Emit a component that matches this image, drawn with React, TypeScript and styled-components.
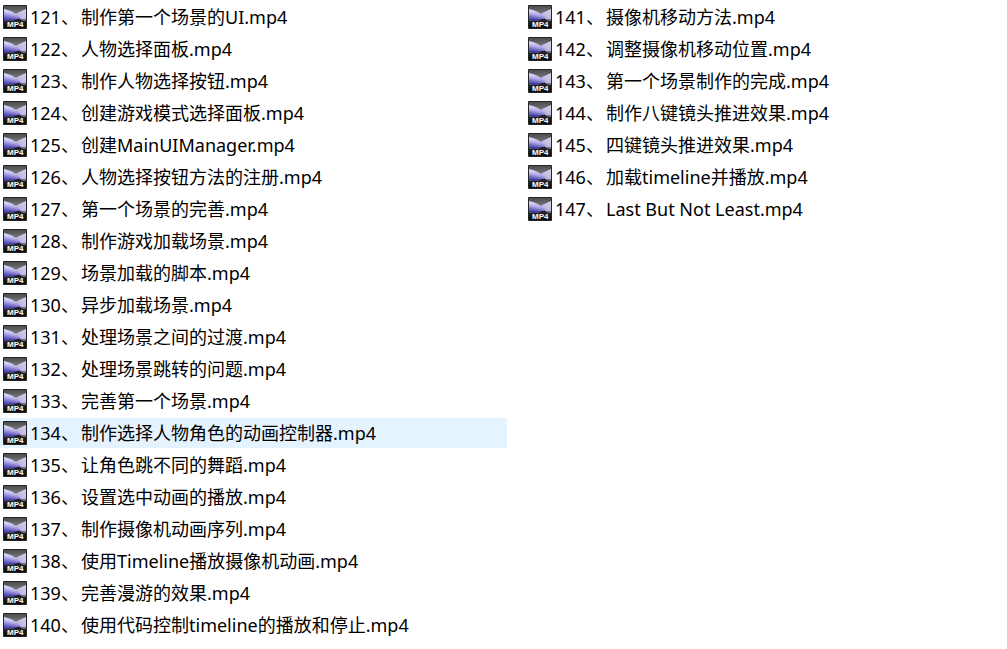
import React from "react";
import styled, { createGlobalStyle } from "styled-components";

const GlobalStyle = createGlobalStyle`
  body {
    margin: 0;
    background: #ffffff;
    color: #000000;
    font-family: "Noto Sans", "Noto Sans CJK SC", sans-serif;
    font-size: 18px;
  }
`;

const FileList = styled.ul`
  display: grid;
  grid-template-columns: minmax(0, 507fr) minmax(0, 482fr);
  grid-template-rows: repeat(20, 30px);
  grid-auto-flow: column;
  gap: 2px 18px;
  margin: 0;
  padding: 2px 0 0;
  list-style: none;
`;

const FileRow = styled.li<{ $hovered: boolean }>`
  display: flex;
  align-items: center;
  gap: 3px;
  padding-left: 3px;
  background: ${(p) => (p.$hovered ? "#e5f3ff" : "transparent")};
`;

const FileName = styled.span`
  line-height: 30px;
  white-space: nowrap;
`;

const FileNumber = styled.span`
  display: inline-block;
  min-width: 51px;
`;

const Icon = styled.svg`
  display: block;
  flex: none;
  width: 24px;
  height: 24px;
`;

const IconLabel = styled.text`
  font-family: "Liberation Sans", sans-serif;
  font-size: 8px;
  font-weight: bold;
  fill: #ffffff;
`;

function IconPaints() {
  return (
    <svg width="0" height="0" style={{ position: "absolute" }} aria-hidden="true">
      <defs>
        <linearGradient id="tile" x1="0" y1="0" x2="0" y2="1">
          <stop offset="0" stopColor="#4c4c4c" />
          <stop offset="0.35" stopColor="#777777" />
          <stop offset="0.56" stopColor="#5c5c5c" />
          <stop offset="0.6" stopColor="#262626" />
          <stop offset="1" stopColor="#0c0c0c" />
        </linearGradient>
        <linearGradient id="leftWing" x1="0.6" y1="0.2" x2="0.4" y2="1">
          <stop offset="0" stopColor="#e2e0fa" />
          <stop offset="0.4" stopColor="#bab6ee" />
          <stop offset="0.8" stopColor="#7a73cc" />
          <stop offset="1" stopColor="#5b52b4" />
        </linearGradient>
        <linearGradient id="rightWing" x1="1" y1="0" x2="0" y2="1">
          <stop offset="0" stopColor="#d6cfea" />
          <stop offset="0.6" stopColor="#c3b9df" />
          <stop offset="1" stopColor="#a294ca" />
        </linearGradient>
      </defs>
    </svg>
  );
}

function Mp4Icon() {
  return (
    <Icon viewBox="0 0 24 24" aria-hidden="true">
      <rect width="24" height="24" rx="1" fill="#252525" />
      <rect x="1" y="1" width="22" height="22" fill="url(#tile)" />
      <path d="M23 4v10h-5l-6-3 2-3z" fill="url(#rightWing)" />
      <path d="M1 4c5 1 9 3 14 6 3 2 2 4-1 4H1z" fill="url(#leftWing)" />
      <path d="M1 14h13l-4 2H1z" fill="#4a4290" />
      <path d="M17 14h6v2h-3z" fill="#75698f" />
      <IconLabel x="4" y="22">MP4</IconLabel>
    </Icon>
  );
}

const HOVERED = 134;

const files: [number, string][] = [
  [121, "制作第一个场景的UI"],
  [122, "人物选择面板"],
  [123, "制作人物选择按钮"],
  [124, "创建游戏模式选择面板"],
  [125, "创建MainUIManager"],
  [126, "人物选择按钮方法的注册"],
  [127, "第一个场景的完善"],
  [128, "制作游戏加载场景"],
  [129, "场景加载的脚本"],
  [130, "异步加载场景"],
  [131, "处理场景之间的过渡"],
  [132, "处理场景跳转的问题"],
  [133, "完善第一个场景"],
  [134, "制作选择人物角色的动画控制器"],
  [135, "让角色跳不同的舞蹈"],
  [136, "设置选中动画的播放"],
  [137, "制作摄像机动画序列"],
  [138, "使用Timeline播放摄像机动画"],
  [139, "完善漫游的效果"],
  [140, "使用代码控制timeline的播放和停止"],
  [141, "摄像机移动方法"],
  [142, "调整摄像机移动位置"],
  [143, "第一个场景制作的完成"],
  [144, "制作八键镜头推进效果"],
  [145, "四键镜头推进效果"],
  [146, "加载timeline并播放"],
  [147, "Last But Not Least"],
];

export default function App() {
  return (
    <>
      <GlobalStyle />
      <IconPaints />
      <FileList lang="zh-CN">
        {files.map(([number, title]) => (
          <FileRow key={number} $hovered={number === HOVERED}>
            <Mp4Icon />
            <FileName>
              <FileNumber>{`${number}、`}</FileNumber>
              {`${title}.mp4`}
            </FileName>
          </FileRow>
        ))}
      </FileList>
    </>
  );
}
